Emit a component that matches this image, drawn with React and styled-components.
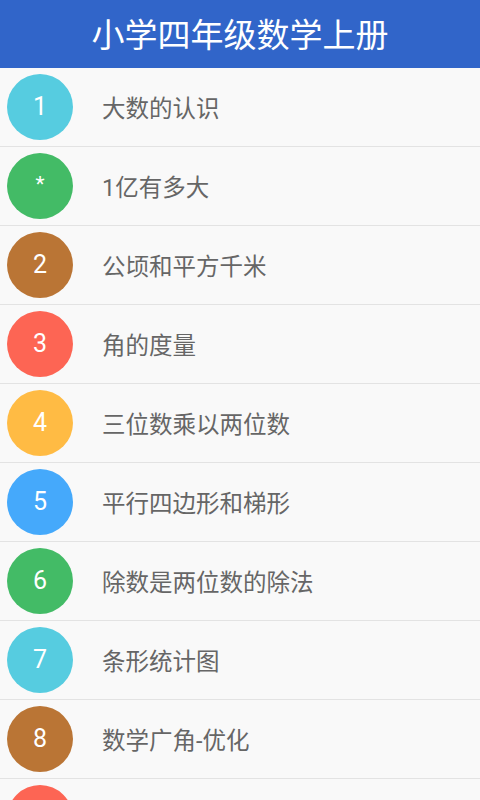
import React from "react";
import styled, { createGlobalStyle } from "styled-components";

const chapters = [
    { mark: "1", title: "大数的认识", color: "#56cce0" },
    { mark: "*", title: "1亿有多大", color: "#43bb66" },
    { mark: "2", title: "公顷和平方千米", color: "#ba7535" },
    { mark: "3", title: "角的度量", color: "#fd6554" },
    { mark: "4", title: "三位数乘以两位数", color: "#ffbb44" },
    { mark: "5", title: "平行四边形和梯形", color: "#45a9fb" },
    { mark: "6", title: "除数是两位数的除法", color: "#43bb66" },
    { mark: "7", title: "条形统计图", color: "#56cce0" },
    { mark: "8", title: "数学广角-优化", color: "#ba7535" },
    { mark: "9", title: "总复习", color: "#fd6554" },
];

const GlobalStyle = createGlobalStyle`
    html, body {
        margin: 0;
        padding: 0;
        background: #f9f9f9;
    }
    body {
        font-family: Roboto, "Noto Sans CJK SC", sans-serif;
        overflow: hidden;
    }
`;

function App() {
    return (
        <Page>
            <GlobalStyle />
            <Header>小学四年级数学上册</Header>
            <List>
                {chapters.map((c) => (
                    <Row key={c.title}>
                        <Badge color={c.color} small={c.mark === "*"}>
                            {c.mark}
                        </Badge>
                        <Title>{c.title}</Title>
                    </Row>
                ))}
            </List>
        </Page>
    );
}

export default App;

const Page = styled.div`
    width: 480px;
    height: 800px;
    overflow: hidden;
    background: #f9f9f9;
    display: flex;
    flex-direction: column;
`;

const Header = styled.div`
    height: 68px;
    flex-shrink: 0;
    background: #3165c9;
    color: #ffffff;
    display: flex;
    align-items: center;
    justify-content: center;
    font-size: 33px;
    font-family: "Noto Sans CJK SC", sans-serif;
    padding-bottom: 2px;
    box-sizing: border-box;
`;

const List = styled.div`
    display: flex;
    flex-direction: column;
`;

const Row = styled.div`
    height: 79px;
    flex-shrink: 0;
    box-sizing: border-box;
    border-bottom: 1px solid #e3e3e3;
    display: flex;
    align-items: center;
    padding: 0 0 1px 7px;
`;

const Badge = styled.div`
    width: 66px;
    height: 66px;
    border-radius: 50%;
    background: ${(p) => p.color};
    color: #ffffff;
    display: flex;
    align-items: center;
    justify-content: center;
    font-family: Roboto, sans-serif;
    font-weight: 400;
    font-size: ${(p) => (p.small ? "21px" : "25px")};
    padding-bottom: ${(p) => (p.small ? "4px" : "0")};
    box-sizing: border-box;
    flex-shrink: 0;
`;

const Title = styled.div`
    margin-left: 29px;
    font-size: 23.5px;
    color: #666666;
    font-family: Roboto, "Noto Sans CJK SC", sans-serif;
`;
